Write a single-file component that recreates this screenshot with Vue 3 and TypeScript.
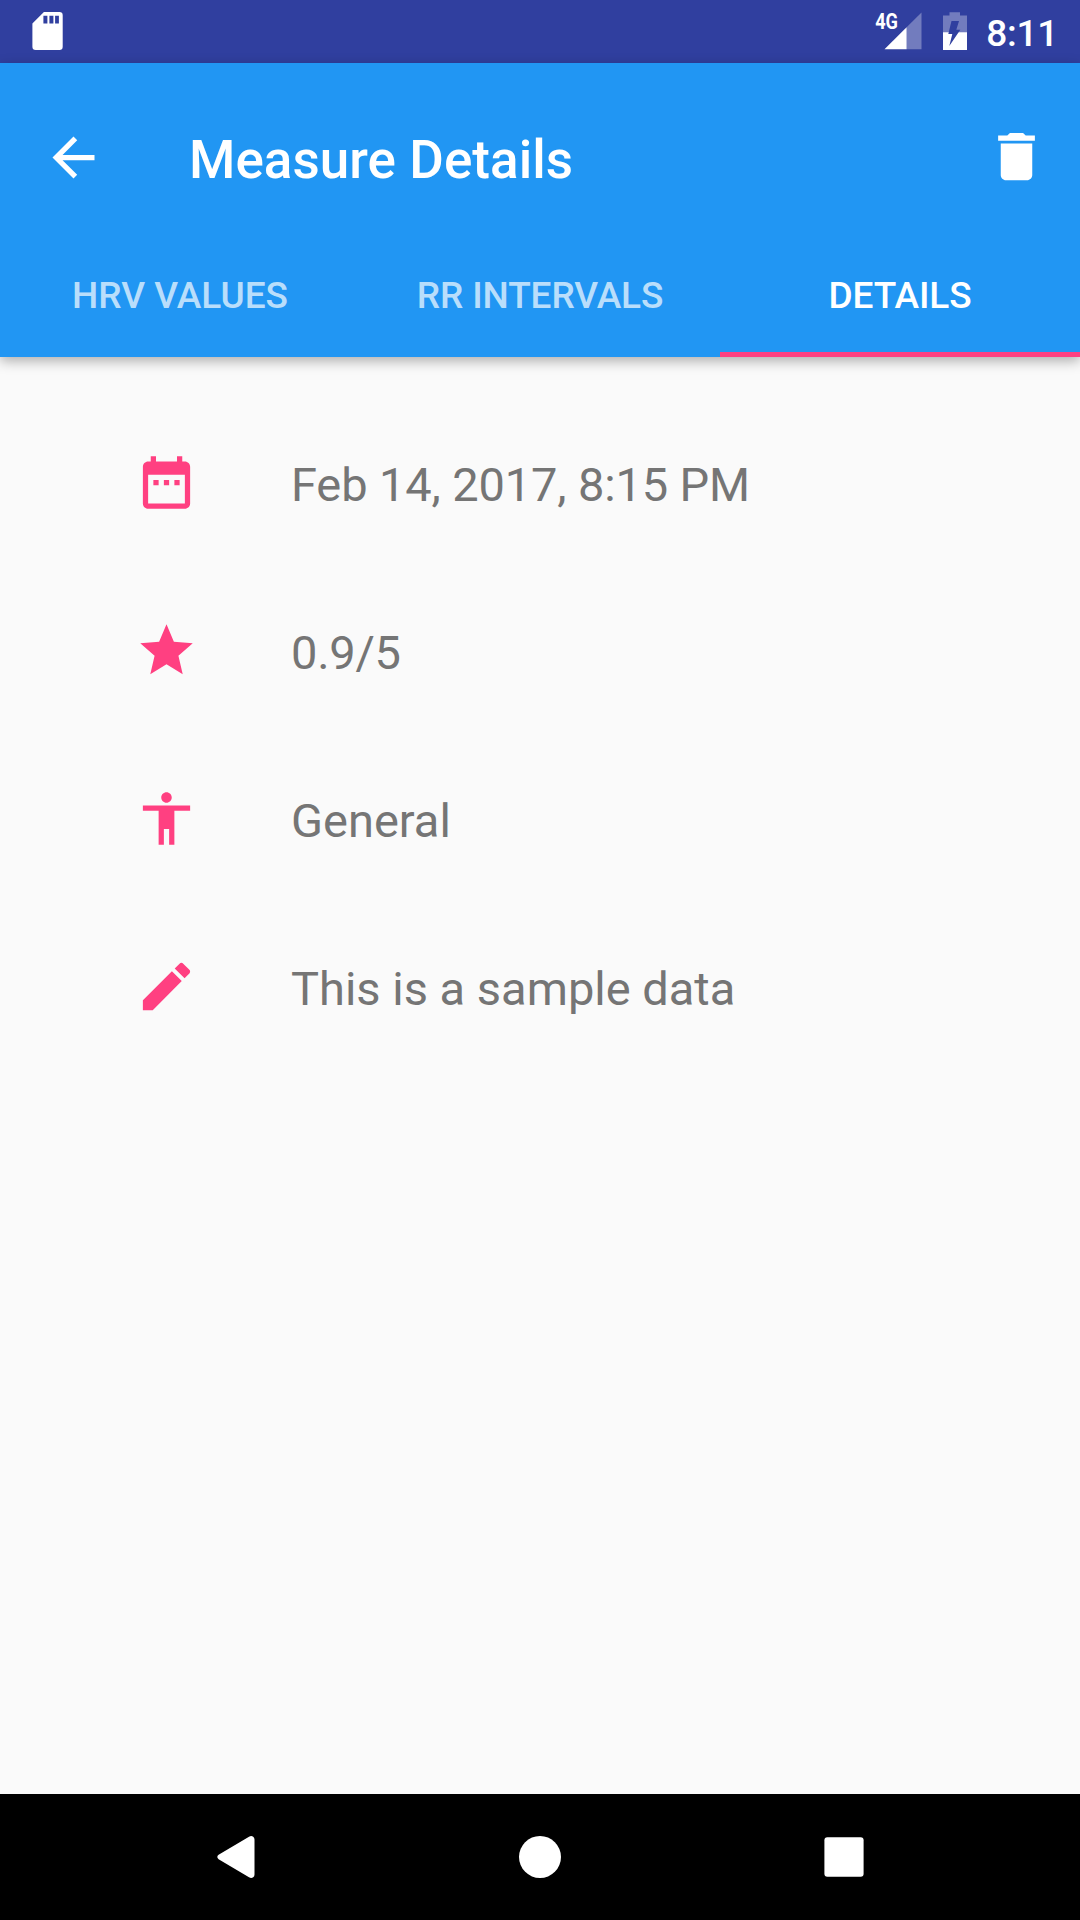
<script setup lang="ts">
interface DetailRow {
  id: string
  icon: string
  text: string
}

interface Tab {
  label: string
  active: boolean
}

const tabs: Tab[] = [
  { label: 'HRV VALUES', active: false },
  { label: 'RR INTERVALS', active: false },
  { label: 'DETAILS', active: true },
]

const rows: DetailRow[] = [
  {
    id: 'date',
    icon: 'M9 11H7v2h2v-2zm4 0h-2v2h2v-2zm4 0h-2v2h2v-2zm2-7h-1V2h-2v2H8V2H6v2H5c-1.11 0-1.99.9-1.99 2L3 20c0 1.1.89 2 2 2h14c1.1 0 2-.9 2-2V6c0-1.1-.9-2-2-2zm0 16H5V9h14v11z',
    text: 'Feb 14, 2017, 8:15 PM',
  },
  {
    id: 'rating',
    icon: 'M12 17.27L18.18 21l-1.64-7.03L22 9.24l-7.19-.61L12 2 9.19 8.63 2 9.24l5.46 4.73L5.82 21z',
    text: '0.9/5',
  },
  {
    id: 'category',
    icon: 'M12 2c1.1 0 2 .9 2 2s-.9 2-2 2-2-.9-2-2 .9-2 2-2zm9 7h-6v13h-2v-6h-2v6H9V9H3V7h18v2z',
    text: 'General',
  },
  {
    id: 'note',
    icon: 'M3 17.25V21h3.75L17.81 9.94l-3.75-3.75L3 17.25zM20.71 7.04c.39-.39.39-1.02 0-1.41l-2.34-2.34c-.39-.39-1.02-.39-1.41 0l-1.83 1.83 3.75 3.75 1.83-1.83z',
    text: 'This is a sample data',
  },
]
</script>

<template>
  <div class="screen">
    <div class="status">
      <svg class="sd" width="31" height="38" viewBox="0 0 31 38">
        <path
          fill="#fff"
          fill-rule="evenodd"
          d="M11.9 0H27.4a3.3 3.3 0 0 1 3.3 3.3V34.7A3.3 3.3 0 0 1 27.4 38H3.7A3.3 3.3 0 0 1 .4 34.7V11.5zM11.4 3.7V11.5H15.4V3.7zM17.4 3.7V11.5H21.4V3.7zM23.1 3.7V11.5H26.9V3.7z"
        />
      </svg>
      <div class="system">
        <svg class="signal" width="47" height="38" viewBox="0 0 47 38">
          <path fill="#fff" fill-opacity=".32" d="M46.5 .6V37.3H31.6V15.3z" />
          <path fill="#fff" d="M9.5 37.3L31.6 15.3V37.3z" />
          <text x="0.2" y="17.1" textLength="22.8" lengthAdjust="spacingAndGlyphs">4G</text>
        </svg>
        <svg class="battery" width="24" height="38" viewBox="0 0 24 38">
          <path fill="#fff" fill-opacity=".32" d="M6.5 .3H17V3.4H24V20.2H0V3.4H6.5z" />
          <path fill="#fff" d="M0 20.2H24V38H0z" />
          <path fill="#303f9f" d="M8.5 8.9H16L13.3 17.8H17.3L6.3 34.1L9.3 22.1H5.3z" />
        </svg>
        <span class="clock">8:11</span>
      </div>
    </div>

    <header class="appbar">
      <div class="toolbar">
        <svg class="icon" viewBox="0 0 24 24">
          <path fill="#fff" d="M20 11H7.83l5.59-5.59L12 4l-8 8 8 8 1.41-1.41L7.83 13H20v-2z" />
        </svg>
        <h1 class="title">Measure Details</h1>
        <svg class="icon trash" viewBox="0 0 24 24">
          <path fill="#fff" d="M6 19c0 1.1.9 2 2 2h8c1.1 0 2-.9 2-2V7H6v12zM19 4h-3.5l-1-1h-5l-1 1H5v2h14V4z" />
        </svg>
      </div>
      <nav class="tabs">
        <div v-for="tab in tabs" :key="tab.label" class="tab" :class="{ active: tab.active }">
          {{ tab.label }}
        </div>
      </nav>
    </header>

    <main class="details">
      <div v-for="row in rows" :key="row.id" class="row">
        <svg class="icon" viewBox="0 0 24 24">
          <path fill="#ff4081" :d="row.icon" />
        </svg>
        <span class="value" :class="row.id">{{ row.text }}</span>
      </div>
    </main>

    <footer class="navbar">
      <div class="key">
        <svg width="38" height="42" viewBox="0 0 38 42">
          <path
            fill="#fff"
            d="M1.6 18.8L32 .8Q34.2-.6 36.2 .7Q37.5 1.6 37.5 3.5V38.5Q37.5 40.4 36.2 41.3Q34.2 42.6 32 41.2L1.6 23.2Q-1 21 1.6 18.8z"
          />
        </svg>
      </div>
      <div class="key"><div class="home"></div></div>
      <div class="key">
        <svg width="40" height="40" viewBox="0 0 40 40">
          <rect x=".4" y=".3" width="39.2" height="39.4" rx="3" fill="#fff" />
        </svg>
      </div>
    </footer>
  </div>
</template>

<style>
body {
  margin: 0;
}
</style>

<style scoped>
.screen {
  width: 1080px;
  height: 1920px;
  display: flex;
  flex-direction: column;
  overflow: hidden;
  background: #fafafa;
  font-family: Roboto, 'Liberation Sans', sans-serif;
}
.status {
  flex: none;
  height: 63px;
  box-sizing: border-box;
  padding: 0 22px 0 32px;
  display: flex;
  justify-content: space-between;
  align-items: center;
  background: #303f9f;
}
.status svg {
  flex: none;
  overflow: visible;
}
.status .sd {
  margin-bottom: 1px;
}
.system {
  display: flex;
  align-items: center;
}
.system svg {
  margin-bottom: 1px;
}
.signal text {
  font: 700 22px Roboto, sans-serif;
  fill: #fff;
}
.battery {
  margin: 0 19px 0 21px;
}
.clock {
  font-size: 37px;
  line-height: 59px;
  font-weight: 500;
  letter-spacing: -0.25px;
  color: #fff;
  padding-top: 4px;
}
.appbar {
  flex: none;
  height: 294px;
  box-sizing: border-box;
  padding-top: 21px;
  background: #2196f3;
  color: #fff;
  box-shadow: 0 4px 12px rgba(0, 0, 0, 0.31);
}
.icon {
  flex: none;
  display: block;
  width: 63px;
  height: 63px;
}
.toolbar {
  height: 147px;
  box-sizing: border-box;
  padding: 0 32px 0 42px;
  display: flex;
  align-items: center;
}
.trash {
  margin-bottom: 2px;
}
.title {
  flex: 1;
  margin: 0;
  padding: 4px 0 0 84px;
  font-size: 53px;
  line-height: 62px;
  font-weight: 500;
  letter-spacing: 0.05px;
}
.tabs {
  display: flex;
  height: 126px;
}
.tab {
  flex: 1;
  box-sizing: border-box;
  padding-top: 2px;
  height: 126px;
  border-bottom: 5px solid transparent;
  text-align: center;
  font-size: 37px;
  line-height: 126px;
  font-weight: 500;
  letter-spacing: -0.1px;
  color: rgba(255, 255, 255, 0.7);
}
.tab:first-child {
  letter-spacing: 0;
}
.tab.active {
  color: #fff;
  border-bottom-color: #ff4081;
}
.details {
  flex: 1;
  padding: 42px 0 0 135px;
}
.row {
  height: 168px;
  display: flex;
  align-items: center;
}
.row .icon {
  margin-bottom: 1px;
}
.value {
  padding: 3px 0 0 93px;
  font-size: 47px;
  line-height: 56px;
  color: #757575;
}
.value.date {
  letter-spacing: -0.13px;
}
.value.rating {
  letter-spacing: -0.25px;
}
.navbar {
  flex: none;
  height: 126px;
  display: flex;
  justify-content: center;
  background: #000;
}
.key {
  width: 304px;
  display: flex;
  align-items: center;
  justify-content: center;
}
.home {
  width: 42px;
  height: 42px;
  border-radius: 50%;
  background: #fff;
}
</style>
